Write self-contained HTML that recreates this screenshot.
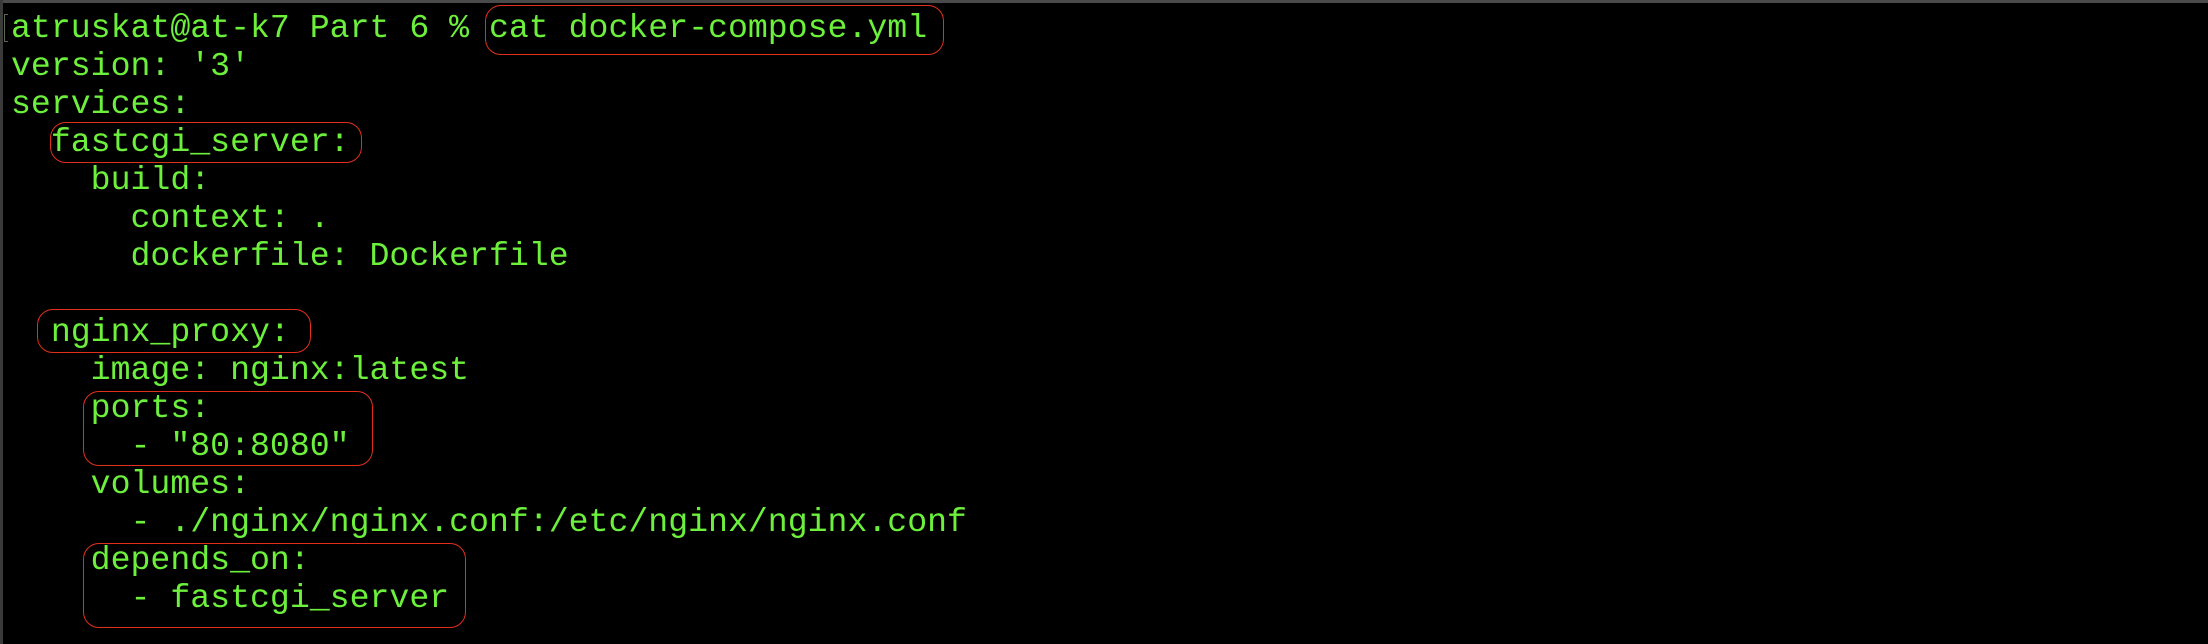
<!DOCTYPE html>
<html><head><meta charset="utf-8"><style>
html,body{margin:0;padding:0;}
body{width:2208px;height:644px;background:#000;position:relative;overflow:hidden;}
.top{position:absolute;left:0;top:0;width:2208px;height:3px;background:#4a4a4a;}
.left{position:absolute;left:0;top:0;width:3px;height:644px;background:#3a3a3a;}
pre{position:absolute;left:11px;top:9px;margin:0;font-family:"Liberation Mono",monospace;font-size:33.2px;line-height:38px;color:#6cf03c;}
.br{position:absolute;left:4px;top:14px;width:4px;height:28px;border:1.5px solid #5a6a50;border-right:none;box-sizing:border-box;}
.b{position:absolute;border:1.5px solid #e0301c;border-radius:16px;box-sizing:border-box;}
</style></head><body>
<div class="top"></div><div class="left"></div><div class="br"></div>
<pre>atruskat@at-k7 Part 6 % cat docker-compose.yml
version: '3'
services:
  fastcgi_server:
    build:
      context: .
      dockerfile: Dockerfile

  nginx_proxy:
    image: nginx:latest
    ports:
      - "80:8080"
    volumes:
      - ./nginx/nginx.conf:/etc/nginx/nginx.conf
    depends_on:
      - fastcgi_server</pre>
<div class="b" style="left:485px;top:5px;width:459px;height:50px;"></div>
<div class="b" style="left:50px;top:122px;width:312px;height:41px;"></div>
<div class="b" style="left:37px;top:309px;width:274px;height:44px;"></div>
<div class="b" style="left:83px;top:391px;width:290px;height:75px;"></div>
<div class="b" style="left:83px;top:543px;width:383px;height:85px;"></div>
</body></html>
